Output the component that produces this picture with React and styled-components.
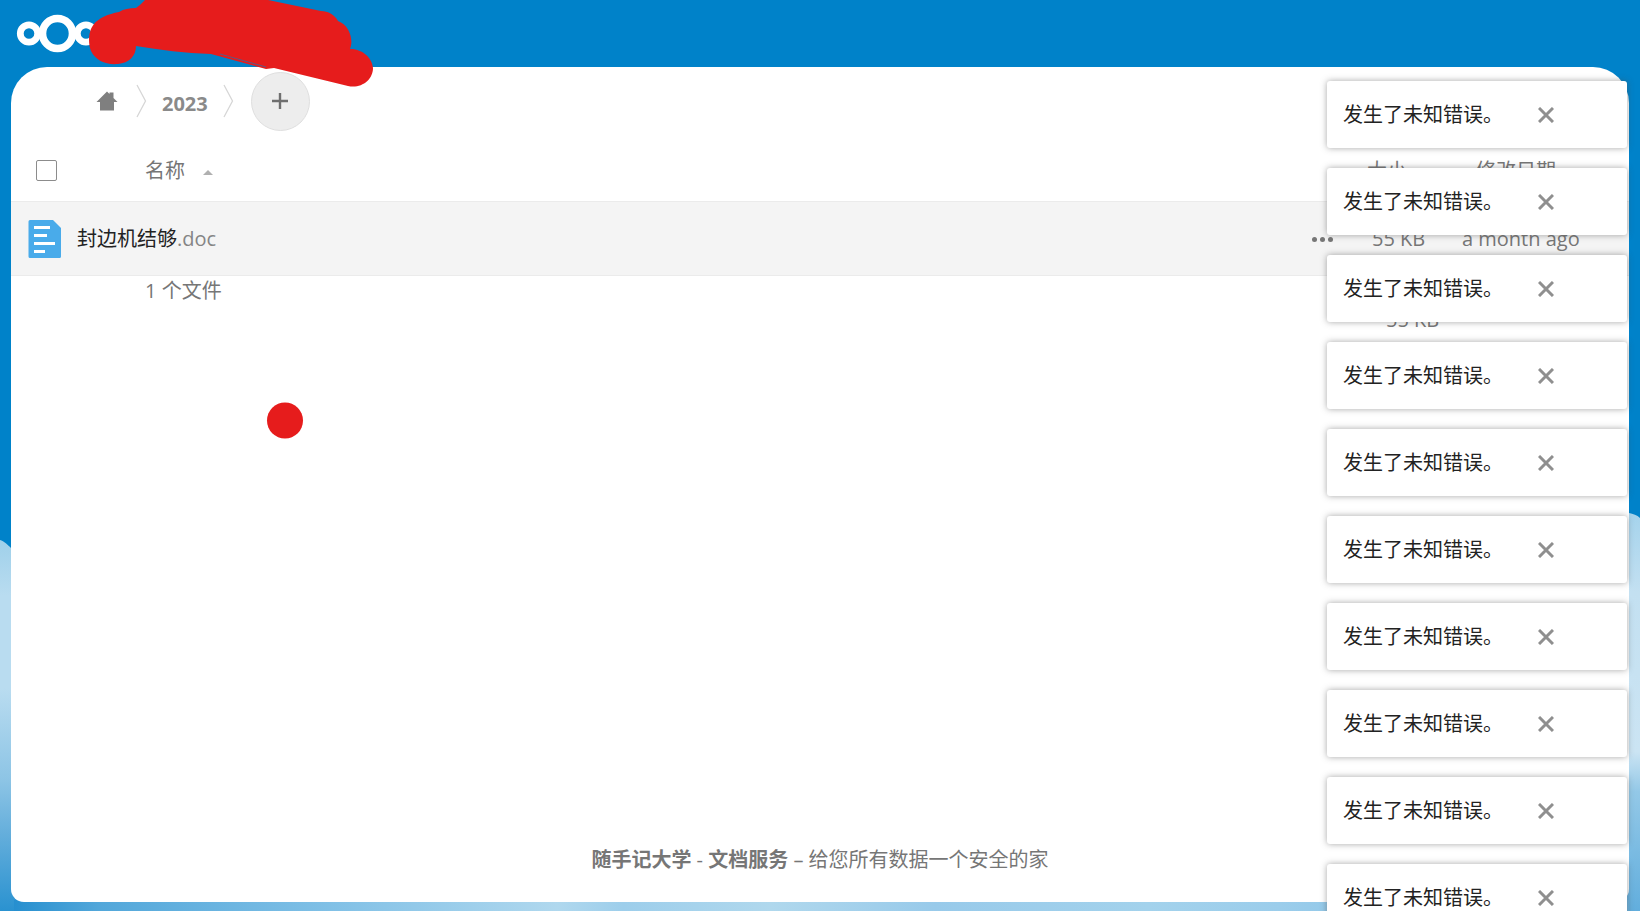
import React from 'react'
import styled, { createGlobalStyle } from 'styled-components'

const toasts = Array.from({ length: 10 }, (_, i) => ({ id: i, text: '发生了未知错误。' }))

const Logo = () => (
  <svg width="92" height="44" viewBox="0 0 92 44" fill="none" stroke="#fff" role="img" aria-label="Nextcloud">
    <circle cx="14" cy="21.500" r="8.700" strokeWidth="6.800" />
    <circle cx="42.500" cy="21.500" r="15" strokeWidth="7.600" />
    <circle cx="71" cy="21.500" r="8.700" strokeWidth="6.800" />
  </svg>
)

const HomeIcon = () => (
  <svg width="22" height="20" viewBox="0 0 22 20" fill="#7f7f7f" aria-hidden="true">
    <path d="M11 .5 13.500 3V1.500H17.500V7L21.500 11H18v8.500H4V11H.5z" />
  </svg>
)

const Chevron = () => (
  <svg width="12" height="34" viewBox="0 0 12 34" fill="none" stroke="#d6d6d6" strokeWidth="1.300" aria-hidden="true">
    <path d="M2 1 10.500 17 2 33" />
  </svg>
)

const PlusIcon = () => (
  <svg width="18" height="18" viewBox="0 0 18 18" stroke="#6f6f6f" strokeWidth="2.400" aria-hidden="true">
    <path d="M9 1v16M1 9h16" />
  </svg>
)

const DocIcon = () => (
  <svg width="34" height="38" viewBox="0 0 34 38" aria-hidden="true">
    <path d="M2 0h23l8 8v28.500a1.500 1.500 0 0 1-1.500 1.500H2a1.500 1.500 0 0 1-1.500-1.500v-35A1.500 1.500 0 0 1 2 0z" fill="#49abea" />
    <path d="M6 7.500h16M6 15.500h13M6 23.500h21M6 31.500h11" stroke="#fff" strokeWidth="2.800" />
  </svg>
)

const CloseIcon = () => (
  <svg width="16" height="16" viewBox="0 0 16 16" stroke="#8f8f8f" strokeWidth="3" aria-hidden="true">
    <path d="M1 1 15 15M15 1 1 15" />
  </svg>
)

const Clouds = () => (
  <Sky viewBox="0 0 1640 911" preserveAspectRatio="none" aria-hidden="true">
    <defs>
      <linearGradient id="cloudLeft" gradientUnits="userSpaceOnUse" x1="0" y1="540" x2="0" y2="911">
        <stop offset="0" stopColor="#9fd0ea" />
        <stop offset="0.150" stopColor="#b9dcf0" />
        <stop offset="0.400" stopColor="#b9dcf0" />
        <stop offset="0.650" stopColor="#8cc4e5" />
        <stop offset="0.800" stopColor="#62addb" />
        <stop offset="1" stopColor="#2a92d0" />
      </linearGradient>
      <linearGradient id="cloudRight" gradientUnits="userSpaceOnUse" x1="0" y1="513" x2="0" y2="911">
        <stop offset="0" stopColor="#a5d3ec" />
        <stop offset="0.200" stopColor="#c3e0f1" />
        <stop offset="0.600" stopColor="#cbe4f3" />
        <stop offset="0.700" stopColor="#93c8e7" />
        <stop offset="1" stopColor="#62aedd" />
      </linearGradient>
      <linearGradient id="cloudBottom" gradientUnits="userSpaceOnUse" x1="0" y1="0" x2="1640" y2="0">
        <stop offset="0" stopColor="#1f8bcd" />
        <stop offset="0.060" stopColor="#52a7da" />
        <stop offset="0.200" stopColor="#80c0e6" />
        <stop offset="0.340" stopColor="#b0d8ee" />
        <stop offset="0.380" stopColor="#9dceeb" />
        <stop offset="0.470" stopColor="#b0d8ed" />
        <stop offset="0.570" stopColor="#98caea" />
        <stop offset="0.700" stopColor="#a3d2ec" />
        <stop offset="0.780" stopColor="#9bcdeb" />
        <stop offset="1" stopColor="#6bb3df" />
      </linearGradient>
    </defs>
    <path d="M0 540C4 541 8 545 11 548L400 600V911H0z" fill="url(#cloudLeft)" />
    <path d="M1640 518C1637 515 1633 514 1629 513L1240 600V911H1640z" fill="url(#cloudRight)" />
    <path d="M14 900H1629V911H14z" fill="url(#cloudBottom)" />
  </Sky>
)

const App = () => {
  return (
    <Page>
      <GlobalStyle />
      <Clouds />
      <Header>
        <a href="#home"><Logo /></a>
      </Header>
      <Panel>
        <Crumbs aria-label="Breadcrumb">
          <CrumbLink href="#files" aria-label="Home"><HomeIcon /></CrumbLink>
          <Chevron />
          <CrumbLink href="#2023">2023</CrumbLink>
          <Chevron />
          <AddButton aria-label="New"><PlusIcon /></AddButton>
        </Crumbs>
        <Files>
          <colgroup>
            <Col $width={66} />
            <col />
            <Col $width={55} />
            <Col $width={95} />
            <Col $width={167} />
          </colgroup>
          <thead>
            <HeadRow>
              <Cell as="th"><CheckBox type="checkbox" aria-label="Select all" /></Cell>
              <Cell as="th" $indent={68}><SortButton>名称 <Caret /></SortButton></Cell>
              <Cell as="th" />
              <Cell as="th">大小</Cell>
              <Cell as="th" $indent={14}>修改日期</Cell>
            </HeadRow>
          </thead>
          <tbody>
            <FileRow>
              <Cell $indent={17}><DocIcon /></Cell>
              <Cell><FileLink href="#doc">封边机结够<span>.doc</span></FileLink></Cell>
              <Cell><MoreButton aria-label="Actions"><i /><i /><i /></MoreButton></Cell>
              <Cell $indent={5}>55 KB</Cell>
              <Cell>a month ago</Cell>
            </FileRow>
          </tbody>
          <tfoot>
            <SummaryRow>
              <Cell />
              <Cell $indent={68}>1 个文件</Cell>
              <Cell />
              <TotalCell $indent={19}>55 KB</TotalCell>
              <Cell />
            </SummaryRow>
          </tfoot>
        </Files>
        <Footer>
          <b>随手记大学</b> - <b>文档服务</b> – 给您所有数据一个安全的家
        </Footer>
      </Panel>
      <Marks width="400" height="460" viewBox="0 0 400 460" aria-hidden="true">
        <path d="M145 0C142 3 139 6 136 8C129 8 124 9 119 12C108 14 99 18 94 24C88 31 88 44 91 51C96 61 106 65 118 64C129 63 136 56 136 46C160 50 185 53 211 54L266 69L274 68L348 86C361 89 373 80 373 68C372 57 362 49 350 49C354 39 349 25 338 21C335 15 328 11 321 11L268 0z" fill="#e61c1c" />
        <path d="M220 54 266 67" stroke="#0082c9" strokeWidth="0.600" />
        <circle cx="285" cy="420.500" r="18" fill="#e61c1c" />
      </Marks>
      <ToastList>
        {toasts.map((toast) => (
          <Toast key={toast.id} role="alert">
            <span>{toast.text}</span>
            <CloseButton aria-label="Close"><CloseIcon /></CloseButton>
          </Toast>
        ))}
      </ToastList>
    </Page>
  )
}

const GlobalStyle = createGlobalStyle`
  * {
    box-sizing: border-box;
  }
  body {
    margin: 0;
    overflow: hidden;
    font-family: "Open Sans", "Noto Sans CJK SC", sans-serif;
    font-size: 20px;
    line-height: 30px;
    color: #222;
  }
  a {
    color: inherit;
    text-decoration: none;
  }
  button {
    border: 0;
    padding: 0;
    background: none;
    font: inherit;
    color: inherit;
    cursor: pointer;
  }
  svg {
    display: block;
  }
`

const Page = styled.div`
  position: relative;
  display: flex;
  flex-direction: column;
  height: 100vh;
  padding: 0 11px 9px;
  overflow: hidden;
  background: #0082c9;
`

const Sky = styled.svg`
  position: absolute;
  inset: 0;
  width: 100%;
  height: 100%;
`

const Header = styled.header`
  position: relative;
  display: flex;
  align-items: center;
  height: 67px;
  padding: 0 4px;
`

const Panel = styled.main`
  position: relative;
  flex: 1;
  display: flex;
  flex-direction: column;
  overflow: hidden;
  background: #fff;
  border-radius: 36px 36px 13px 13px;
`

const Crumbs = styled.nav`
  display: flex;
  align-items: center;
  height: 68px;
  padding-left: 85px;
`

const CrumbLink = styled.a`
  margin-right: 17px;
  font-weight: 700;
  color: #8a8a8a;

  svg + & {
    margin: 6px 14px 0 15px;
  }
`

const AddButton = styled.button`
  display: flex;
  align-items: center;
  justify-content: center;
  width: 59px;
  height: 59px;
  margin-left: 17px;
  border: 1px solid #dedede;
  border-radius: 50%;
  background: #ededed;
`

const Files = styled.table`
  width: 100%;
  border-collapse: collapse;
  table-layout: fixed;
  color: #767676;
`

const Col = styled.col`
  width: ${({ $width }) => $width}px;
`

const Cell = styled.td`
  padding: 0 0 0 ${({ $indent = 0 }) => $indent}px;
  text-align: left;
  font-weight: 400;
`

const TotalCell = styled(Cell)`
  padding-top: 29px;
`

const HeadRow = styled.tr`
  height: 66px;

  ${Cell} {
    padding-top: 6px;
  }
`

const CheckBox = styled.input`
  display: block;
  appearance: none;
  width: 21px;
  height: 21px;
  margin: 0 0 0 25px;
  border: 1px solid #8c8c8c;
  border-radius: 2px;
  background: #fff;
`

const SortButton = styled.button`
  display: flex;
  align-items: center;
  gap: 18px;
`

const Caret = styled.i`
  margin-top: 4px;
  border: 5px solid transparent;
  border-top: 0;
  border-bottom-color: #b0b0b0;
`

const FileRow = styled.tr`
  height: 74px;
  background: #f4f4f4;
  border-top: 1px solid #ebebeb;
  border-bottom: 1px solid #ebebeb;

  ${Cell} {
    padding-top: 2px;
  }
`

const FileLink = styled.a`
  color: #222;

  span {
    color: #858585;
  }
`

const MoreButton = styled.button`
  display: flex;
  gap: 3px;

  i {
    width: 5px;
    height: 5px;
    border-radius: 50%;
    background: #767676;
  }
`

const SummaryRow = styled.tr`
  height: 74px;
  vertical-align: top;
`

const Footer = styled.footer`
  margin: auto 0 27px;
  text-align: center;
  color: #767676;
`

const Marks = styled.svg`
  position: absolute;
  top: 0;
  left: 0;
  pointer-events: none;
`

const ToastList = styled.div`
  position: absolute;
  top: 81px;
  right: 13px;
  display: flex;
  flex-direction: column;
  gap: 20px;
  width: 300px;
`

const Toast = styled.div`
  display: flex;
  align-items: center;
  height: 67px;
  padding: 0 16px;
  border-radius: 3px;
  background: #fff;
  box-shadow: 0 0 6px rgba(77, 77, 77, 0.5);
`

const CloseButton = styled.button`
  margin-left: 35px;
`

export default App
